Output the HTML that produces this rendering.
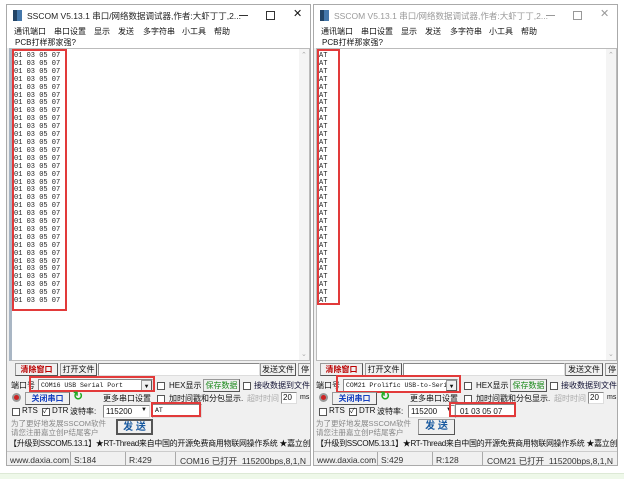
<!DOCTYPE html>
<html><head><meta charset="utf-8"><style>
*{margin:0;padding:0;box-sizing:border-box}
body{width:624px;height:479px;background:#fff;position:relative;overflow:hidden;font-family:"Liberation Sans","Noto Sans CJK SC",sans-serif;font-size:8px;color:#111}
.a{position:absolute;white-space:nowrap}
.win{position:absolute;top:4px;width:305px;height:462px;background:#f0f0f0;border:1px solid #aaa;overflow:hidden}
.tb{left:0;top:0;width:305px;height:20px;background:#fff}
.mn{left:0;top:20px;width:305px;height:23px;background:#fff}
.rx{left:2px;top:43px;width:301px;height:313px;background:#fff;border:1px solid #bbb}
.sb{right:0;top:0;width:10px;height:311px;background:#f4f4f4}
.data{left:2px;top:4px;font-family:"Liberation Mono",monospace;font-size:7px;line-height:7.9px;white-space:pre;color:#222}
.btn{background:#f0f0f0;border:1px solid #999;border-right-color:#555;border-bottom-color:#555;text-align:center;line-height:11px}
.inp{background:#fff;border:1px solid #888;border-right-color:#ddd;border-bottom-color:#ddd}
.cb{width:8px;height:8px;border:1px solid #555;background:#fff}
.red{border:2px solid #e23a3a}
.mono{font-family:"Liberation Mono",monospace;font-size:6.5px}
.m{position:absolute;top:1px}
</style></head><body>

<!-- LEFT WINDOW -->
<div class="win" style="left:6px">
 <div class="a tb"><div class="a" style="left:6px;top:5px;width:9px;height:11px;background:linear-gradient(90deg,#246 0 4px,#47a 4px)"></div>
 <div class="a" style="left:20px;top:5px;font-size:8.5px;color:#222">SSCOM V5.13.1 串口/网络数据调试器,作者:大虾丁丁,2...</div>
 <div class="a" style="left:232px;top:10px;width:9px;height:1px;background:#333"></div><div class="a" style="left:259px;top:6px;width:9px;height:9px;border:1px solid #333"></div><div class="a" style="left:286px;top:2px;font-size:11px">✕</div></div>
 <div class="a mn"><span class="m" style="left:7px">通讯端口</span><span class="m" style="left:47px">串口设置</span><span class="m" style="left:87px">显示</span><span class="m" style="left:111px">发送</span><span class="m" style="left:136px">多字符串</span><span class="m" style="left:175px">小工具</span><span class="m" style="left:207px">帮助</span>
 <div class="a" style="left:8px;top:12px">PCB打样那家强?</div></div>
 <div class="a rx" style="border-left:3px solid #a9b6c4"><div class="a sb"><div class="a" style="left:2px;top:2px;font-size:7px;color:#aaa">⌃</div><div class="a" style="left:2px;bottom:2px;font-size:7px;color:#aaa">⌄</div></div>
 <div class="a red" style="left:0;top:0;width:55px;height:262px"></div>
 <div class="a data">01 03 05 07
01 03 05 07
01 03 05 07
01 03 05 07
01 03 05 07
01 03 05 07
01 03 05 07
01 03 05 07
01 03 05 07
01 03 05 07
01 03 05 07
01 03 05 07
01 03 05 07
01 03 05 07
01 03 05 07
01 03 05 07
01 03 05 07
01 03 05 07
01 03 05 07
01 03 05 07
01 03 05 07
01 03 05 07
01 03 05 07
01 03 05 07
01 03 05 07
01 03 05 07
01 03 05 07
01 03 05 07
01 03 05 07
01 03 05 07
01 03 05 07
01 03 05 07</div></div>
 <div class="a btn" style="left:8px;top:358px;width:43px;height:13px;color:#b00;font-weight:bold">清除窗口</div>
 <div class="a btn" style="left:53px;top:358px;width:37px;height:13px">打开文件</div>
 <div class="a inp" style="left:91px;top:358px;width:162px;height:13px"></div>
 <div class="a btn" style="left:253px;top:358px;width:36px;height:13px">发送文件</div>
 <div class="a btn" style="left:291px;top:358px;width:14px;height:13px">停</div>
 <div class="a" style="left:4px;top:375px">端口号</div>
 <div class="a inp mono" style="left:31px;top:374px;width:115px;height:13px;padding:2px 2px">COM16 USB Serial Port<span class="a btn" style="right:0;top:0;width:11px;height:11px;font-size:6px">▼</span></div>
 <div class="a red" style="left:22px;top:371px;width:126px;height:16px"></div>
 <div class="a cb" style="left:150px;top:377px"></div><div class="a" style="left:162px;top:375px">HEX显示</div>
 <div class="a btn" style="left:196px;top:374px;width:37px;height:13px;color:#1a8a1a">保存数据</div>
 <div class="a cb" style="left:236px;top:377px"></div><div class="a" style="left:247px;top:375px;color:#113">接收数据到文件</div>
 <div class="a" style="left:5px;top:388px;width:9px;height:9px;border-radius:50%;background:#c22;border:2px solid #999"></div>
 <div class="a btn" style="left:18px;top:387px;width:45px;height:13px;color:#1540c0;font-weight:bold">关闭串口</div>
 <div class="a" style="left:66px;top:384px;font-size:12px;color:#2a2;font-weight:bold">↻</div>
 <div class="a" style="left:96px;top:388px">更多串口设置</div>
 <div class="a cb" style="left:150px;top:390px"></div><div class="a" style="left:162px;top:388px">加时间戳和分包显示.</div>
 <div class="a" style="left:240px;top:388px;color:#aaa">超时时间</div>
 <div class="a inp" style="left:274px;top:387px;width:16px;height:12px;padding-left:1px">20</div><div class="a" style="left:293px;top:389px;font-size:7px">ms</div>
 <div class="a cb" style="left:5px;top:403px"></div><div class="a" style="left:15px;top:401px">RTS</div>
 <div class="a cb" style="left:35px;top:403px;font-size:7px;line-height:6px">✓</div><div class="a" style="left:45px;top:401px">DTR</div>
 <div class="a" style="left:63px;top:401px">波特率:</div>
 <div class="a inp" style="left:96px;top:400px;width:47px;height:13px;padding:1px 2px">115200<span class="a" style="right:2px;top:1px;font-size:6px">▼</span></div>
 <div class="a inp mono" style="left:145px;top:399px;width:50px;height:14px;padding:2px">AT</div>
 <div class="a red" style="left:144px;top:397px;width:50px;height:15px"></div>
 <div class="a" style="left:4px;top:414px;color:#888;font-size:7.5px;line-height:9px">为了更好地发展SSCOM软件<br>请您注册嘉立创P结尾客户</div>
 <div class="a btn" style="left:109px;top:414px;width:37px;height:16px;line-height:14px;color:#1a5aa0;font-weight:bold;font-size:10px;border:2px solid #555">发 送</div>
 <div class="a" style="left:2px;top:433px;font-size:8px;letter-spacing:-0.3px">【升级到SSCOM5.13.1】★RT-Thread来自中国的开源免费商用物联网操作系统 ★嘉立创P</div>
 <div class="a" style="left:0;top:446px;width:305px;height:16px;background:#f0f0f0;border-top:1px solid #ccc;font-size:8.5px;color:#333">
  <span class="a" style="left:3px;top:3px">www.daxia.com</span><span class="a" style="left:63px;top:0;height:14px;border-left:1px solid #aaa"></span><span class="a" style="left:67px;top:3px">S:184</span><span class="a" style="left:118px;top:0;height:14px;border-left:1px solid #aaa"></span><span class="a" style="left:122px;top:3px">R:429</span><span class="a" style="left:168px;top:0;height:14px;border-left:1px solid #aaa"></span><span class="a" style="left:173px;top:3px">COM16 已打开&nbsp; 115200bps,8,1,N</span></div>
</div>

<!-- RIGHT WINDOW -->
<div class="win" style="left:313px">
 <div class="a tb"><div class="a" style="left:6px;top:5px;width:9px;height:11px;background:linear-gradient(90deg,#246 0 4px,#47a 4px)"></div>
 <div class="a" style="left:20px;top:5px;font-size:8.5px;color:#999">SSCOM V5.13.1 串口/网络数据调试器,作者:大虾丁丁,2...</div>
 <div class="a" style="left:232px;top:10px;width:9px;height:1px;background:#999"></div><div class="a" style="left:259px;top:6px;width:9px;height:9px;border:1px solid #999"></div><div class="a" style="left:286px;top:2px;font-size:11px;color:#999">✕</div></div>
 <div class="a mn"><span class="m" style="left:7px">通讯端口</span><span class="m" style="left:47px">串口设置</span><span class="m" style="left:87px">显示</span><span class="m" style="left:111px">发送</span><span class="m" style="left:136px">多字符串</span><span class="m" style="left:175px">小工具</span><span class="m" style="left:207px">帮助</span>
 <div class="a" style="left:8px;top:12px">PCB打样那家强?</div></div>
 <div class="a rx"><div class="a sb"><div class="a" style="left:2px;top:2px;font-size:7px;color:#aaa">⌃</div><div class="a" style="left:2px;bottom:2px;font-size:7px;color:#aaa">⌄</div></div>
 <div class="a red" style="left:0;top:0;width:23px;height:256px"></div>
 <div class="a data">AT
AT
AT
AT
AT
AT
AT
AT
AT
AT
AT
AT
AT
AT
AT
AT
AT
AT
AT
AT
AT
AT
AT
AT
AT
AT
AT
AT
AT
AT
AT
AT</div></div>
 <div class="a btn" style="left:6px;top:358px;width:43px;height:13px;color:#b00;font-weight:bold">清除窗口</div>
 <div class="a btn" style="left:51px;top:358px;width:37px;height:13px">打开文件</div>
 <div class="a inp" style="left:89px;top:358px;width:162px;height:13px"></div>
 <div class="a btn" style="left:251px;top:358px;width:38px;height:13px">发送文件</div>
 <div class="a btn" style="left:291px;top:358px;width:14px;height:13px">停</div>
 <div class="a" style="left:2px;top:375px">端口号</div>
 <div class="a inp mono" style="left:29px;top:374px;width:115px;height:13px;padding:2px 2px">COM21 Prolific USB-to-Seri<span class="a btn" style="right:0;top:0;width:11px;height:11px;font-size:6px">▼</span></div>
 <div class="a red" style="left:22px;top:370px;width:125px;height:18px"></div>
 <div class="a cb" style="left:150px;top:377px"></div><div class="a" style="left:162px;top:375px">HEX显示</div>
 <div class="a btn" style="left:196px;top:374px;width:37px;height:13px;color:#1a8a1a">保存数据</div>
 <div class="a cb" style="left:236px;top:377px"></div><div class="a" style="left:247px;top:375px;color:#113">接收数据到文件</div>
 <div class="a" style="left:5px;top:388px;width:9px;height:9px;border-radius:50%;background:#c22;border:2px solid #999"></div>
 <div class="a btn" style="left:18px;top:387px;width:45px;height:13px;color:#1540c0;font-weight:bold">关闭串口</div>
 <div class="a" style="left:66px;top:384px;font-size:12px;color:#2a2;font-weight:bold">↻</div>
 <div class="a" style="left:96px;top:388px">更多串口设置</div>
 <div class="a cb" style="left:150px;top:390px"></div><div class="a" style="left:162px;top:388px">加时间戳和分包显示.</div>
 <div class="a" style="left:240px;top:388px;color:#aaa">超时时间</div>
 <div class="a inp" style="left:274px;top:387px;width:16px;height:12px;padding-left:1px">20</div><div class="a" style="left:293px;top:389px;font-size:7px">ms</div>
 <div class="a cb" style="left:5px;top:403px"></div><div class="a" style="left:15px;top:401px">RTS</div>
 <div class="a cb" style="left:35px;top:403px;font-size:7px;line-height:6px">✓</div><div class="a" style="left:45px;top:401px">DTR</div>
 <div class="a" style="left:63px;top:401px">波特率:</div>
 <div class="a inp" style="left:94px;top:400px;width:47px;height:13px;padding:1px 2px">115200<span class="a" style="right:2px;top:1px;font-size:6px">▼</span></div>
 <div class="a inp" style="left:141px;top:399px;width:60px;height:14px;padding:2px 4px;font-size:8px">01 03 05 07</div>
 <div class="a red" style="left:135px;top:397px;width:67px;height:15px"></div>
 <div class="a" style="left:2px;top:414px;color:#888;font-size:7.5px;line-height:9px">为了更好地发展SSCOM软件<br>请您注册嘉立创P结尾客户</div>
 <div class="a btn" style="left:104px;top:414px;width:37px;height:16px;line-height:14px;color:#1a5aa0;font-weight:bold;font-size:10px">发 送</div>
 <div class="a" style="left:2px;top:433px;font-size:8px;letter-spacing:-0.3px">【升级到SSCOM5.13.1】★RT-Thread来自中国的开源免费商用物联网操作系统 ★嘉立创P</div>
 <div class="a" style="left:0;top:446px;width:305px;height:16px;background:#f0f0f0;border-top:1px solid #ccc;font-size:8.5px;color:#333">
  <span class="a" style="left:3px;top:3px">www.daxia.com</span><span class="a" style="left:63px;top:0;height:14px;border-left:1px solid #aaa"></span><span class="a" style="left:67px;top:3px">S:429</span><span class="a" style="left:118px;top:0;height:14px;border-left:1px solid #aaa"></span><span class="a" style="left:122px;top:3px">R:128</span><span class="a" style="left:168px;top:0;height:14px;border-left:1px solid #aaa"></span><span class="a" style="left:173px;top:3px">COM21 已打开&nbsp; 115200bps,8,1,N</span></div>
</div>

<div class="a" style="left:0;top:473px;width:624px;height:6px;background:#eef8e9;border-top:1px solid #dde9d6"></div>
</body></html>
